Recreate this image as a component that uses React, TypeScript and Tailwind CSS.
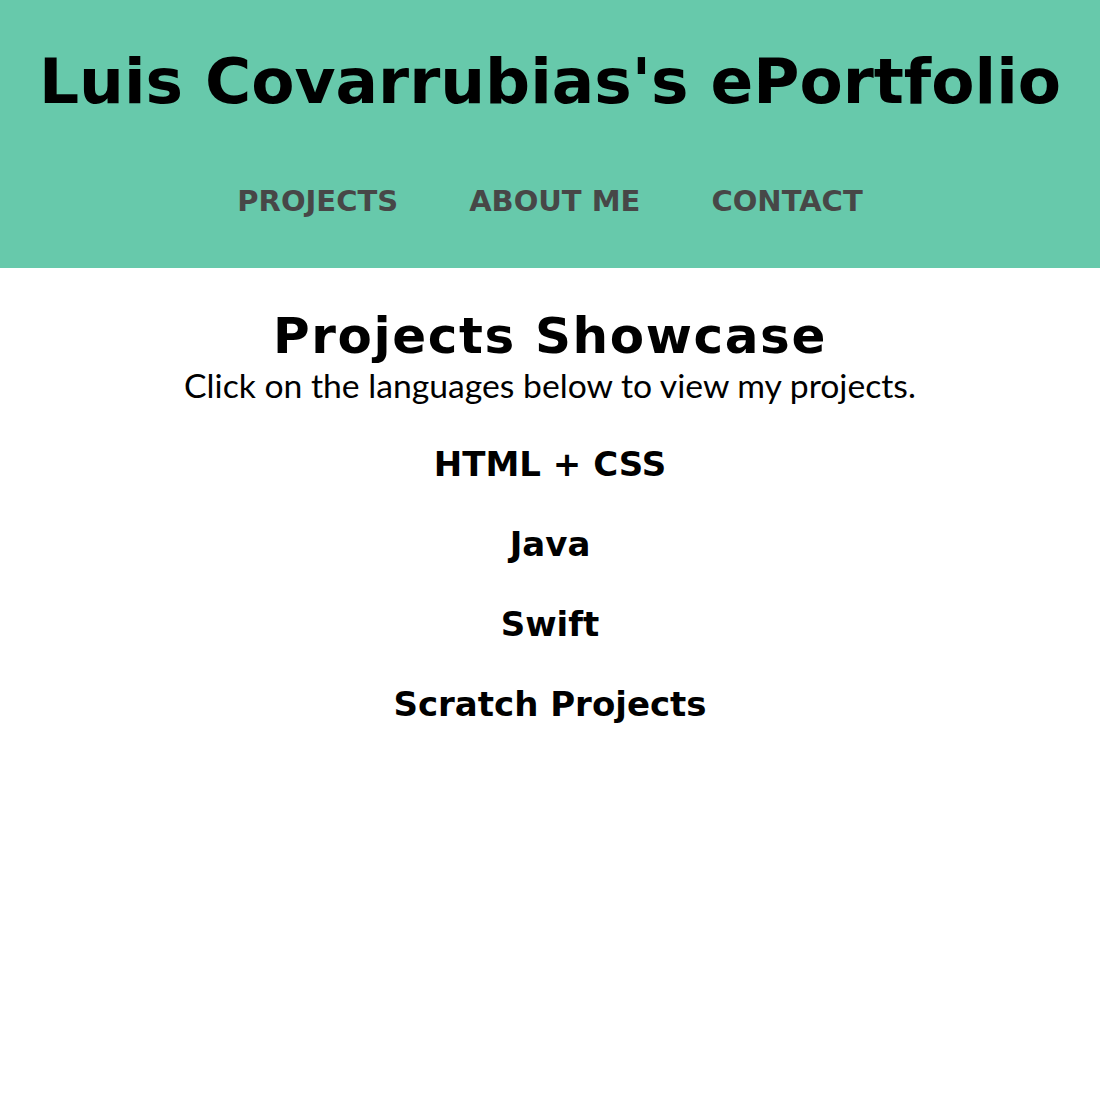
const navLinks = ["PROJECTS", "ABOUT ME", "CONTACT"];
const languages = ["HTML + CSS", "Java", "Swift", "Scratch Projects"];

const App = () => {
  return (
    <div className="min-h-screen bg-white text-black">
      <header className="flex h-[268px] flex-col items-center bg-[#67c9ab] pt-[45px] font-['DejaVu_Sans',sans-serif]">
        <h1 className="text-[63px] leading-[74px] font-bold whitespace-nowrap">Luis Covarrubias's ePortfolio</h1>
        <nav className="mt-[62px] flex gap-[71px]">
          {navLinks.map((link) => (
            <a key={link} href="#" className="text-[29px] leading-[40px] font-bold text-[#474747]">
              {link}
            </a>
          ))}
        </nav>
      </header>
      <main className="flex flex-col items-center pt-[40px]">
        <h2 className="font-['DejaVu_Sans',sans-serif] text-[50px] leading-[56px] font-bold tracking-[1.6px]">
          Projects Showcase
        </h2>
        <p className="mt-[1px] font-['Lato',sans-serif] text-[33.7px] leading-[40px]">
          Click on the languages below to view my projects.
        </p>
        <ul className="mt-[39px] flex flex-col items-center gap-[40px] font-['DejaVu_Sans',sans-serif]">
          {languages.map((lang) => (
            <li key={lang} className="text-[34px] leading-[40px] font-bold">
              {lang}
            </li>
          ))}
        </ul>
      </main>
    </div>
  );
};

export default App;
